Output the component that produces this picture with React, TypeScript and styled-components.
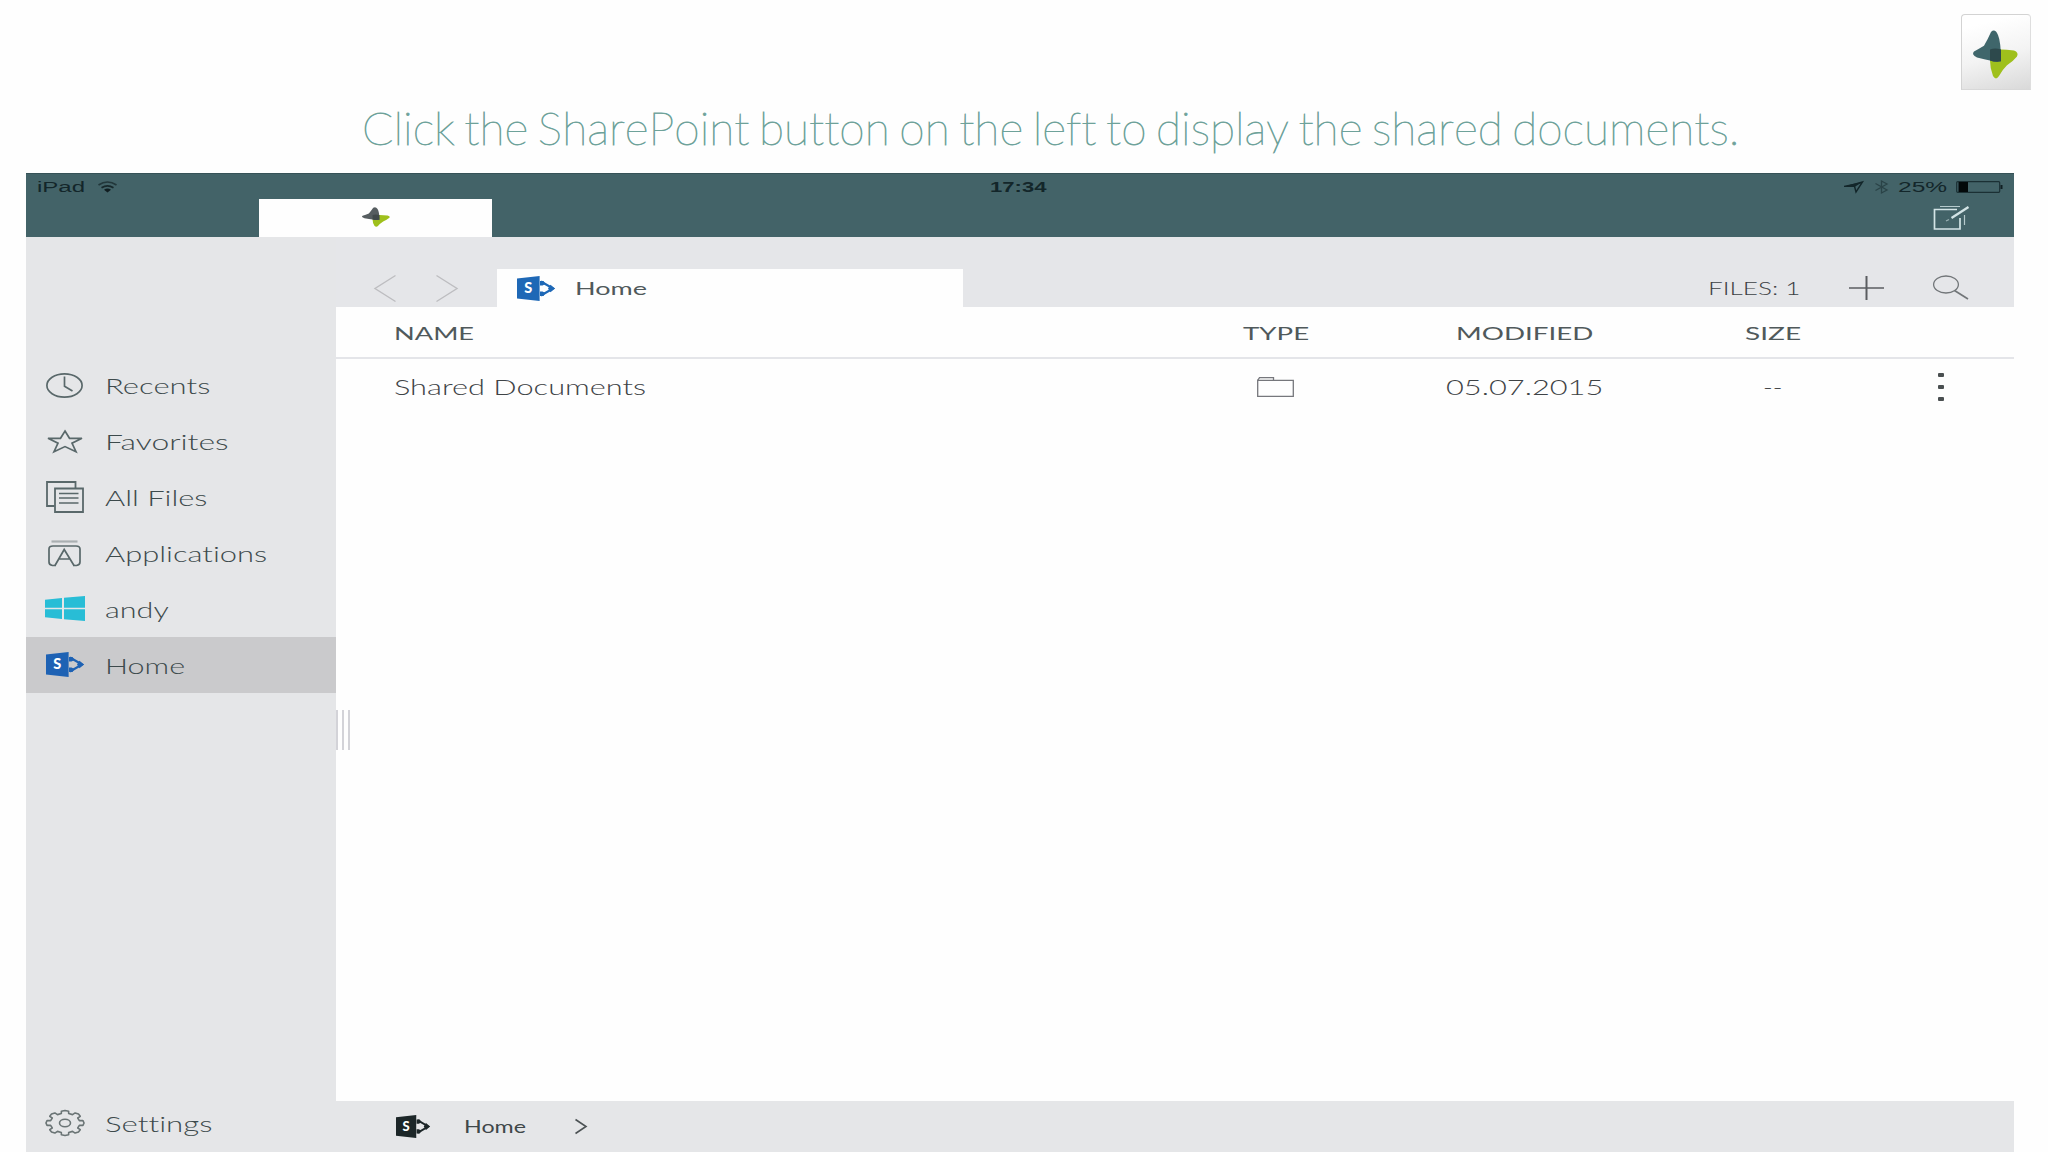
import React, { useLayoutEffect, useRef, useState } from "react";
import styled, { createGlobalStyle } from "styled-components";

const GlobalStyle = createGlobalStyle`
  *, *::before, *::after { box-sizing: border-box; }
  body { margin: 0; background: #fefefe; overflow: hidden; }
`;

const Page = styled.div`
  width: 2048px;
  height: 1152px;
  display: flex;
  flex-direction: column;
  font-family: Lato, "Liberation Sans", sans-serif;
  font-variant-ligatures: none;
  color: #50595b;
`;

/* Wide lettering: each label is stretched horizontally to the width it is given. */
const LabelBox = styled.div<{ $width: number; $drop: number }>`
  flex: none;
  width: ${(p) => p.$width}px;
  padding-top: ${(p) => p.$drop}px;
  white-space: nowrap;
`;

const LabelText = styled.span<{ $size: number; $weight: number; $color?: string; $sans?: boolean }>`
  display: inline-block;
  vertical-align: top;
  transform-origin: left center;
  font-size: ${(p) => p.$size}px;
  line-height: 1.2;
  font-weight: ${(p) => p.$weight};
  ${(p) => p.$color && `color: ${p.$color};`}
  ${(p) => p.$sans && `font-family: "Liberation Sans", Arial, sans-serif;`}
`;

type LabelProps = {
  children: string;
  width: number;
  size?: number;
  weight?: number;
  color?: string;
  drop?: number;
  sans?: boolean;
};

function Label({ children, width, size = 21, weight = 300, color, drop = 0, sans }: LabelProps) {
  const ref = useRef<HTMLSpanElement>(null);
  const [scale, setScale] = useState(1);
  useLayoutEffect(() => {
    if (ref.current) setScale((width + 2) / ref.current.offsetWidth);
  }, [width, children]);
  return (
    <LabelBox $width={width} $drop={drop}>
      <LabelText
        ref={ref}
        $size={size}
        $weight={weight}
        $color={color}
        $sans={sans}
        style={{ transform: `translateX(-1px) scaleX(${scale})` }}
      >
        {children}
      </LabelText>
    </LabelBox>
  );
}

const Svg = styled.svg`
  display: block;
  flex: none;
  overflow: visible;
  fill: none;
`;

const Caption = styled.header`
  height: 173px;
  flex: none;
  display: flex;
  align-items: flex-start;
  justify-content: space-between;
  padding: 14px 17px 0 363px;
`;

const Title = styled.div`
  padding-top: 87px;
  word-spacing: -3.5px;
  font-kerning: none;
  -webkit-text-stroke: 0.8px #6ea29a;
`;

const AppBadge = styled.div`
  width: 70px;
  height: 76px;
  padding: 15px 0 0 11px;
  border: 1px solid #dcdcdc;
  border-color: #d3d3d3 #dedede #d8d8d8 #d3d3d3;
  border-radius: 4px 4px 0 0;
  background: linear-gradient(165deg, #ffffff 15%, #f3f3f3 55%, #d9d9d9 100%);
`;

const Device = styled.main`
  width: 1988px;
  height: 979px;
  margin-left: 26px;
  display: flex;
  flex-direction: column;
`;

const TopBar = styled.div`
  height: 64px;
  flex: none;
  background: #436368;
  border-top: 1px solid #365257;
`;

const StatusRow = styled.div`
  height: 25px;
  display: grid;
  grid-template-columns: 1fr auto 1fr;
  align-items: center;
  padding: 1px 11px 0 8px;
`;

const StatusGroup = styled.div<{ $end?: boolean; $gap: number }>`
  display: flex;
  align-items: center;
  justify-content: ${(p) => (p.$end ? "flex-end" : "flex-start")};
  gap: ${(p) => p.$gap}px;
  padding-left: 4px;
`;

const TabRow = styled.div`
  height: 38px;
  display: flex;
  justify-content: space-between;
  padding: 0 45px 0 233px;
`;

const AppTab = styled.div`
  width: 233px;
  display: flex;
  justify-content: center;
  padding-top: 8px;
  background: #fefefe;
`;

const EditButton = styled.div`
  padding-top: 6px;
`;

const Body = styled.div`
  flex: 1;
  display: flex;
  min-height: 0;
`;

const Sidebar = styled.nav`
  width: 310px;
  flex: none;
  display: flex;
  flex-direction: column;
  padding-top: 120px;
  background: #e5e6e8;
`;

const NavRow = styled.div<{ $active?: boolean; $last?: boolean }>`
  height: 56px;
  display: flex;
  align-items: center;
  padding-left: 18px;
  gap: 21px;
  background: ${(p) => (p.$active ? "#cacacc" : "transparent")};
  ${(p) => p.$last && "margin-top: auto; height: 58px;"}
`;

const IconSlot = styled.div<{ $lift: number }>`
  width: 41px;
  display: flex;
  justify-content: center;
  padding-bottom: ${(p) => p.$lift}px;
`;

const Content = styled.section`
  position: relative;
  flex: 1;
  display: flex;
  flex-direction: column;
  background: #fefefe;
`;

const Toolbar = styled.div`
  height: 70px;
  flex: none;
  display: flex;
  align-items: flex-end;
  justify-content: space-between;
  padding: 0 45px 0 38px;
  background: #e5e6e9;
`;

const ToolGroup = styled.div`
  display: flex;
  align-items: flex-end;
`;

const Arrows = styled.div`
  display: flex;
  gap: 40px;
  padding-bottom: 5px;
  margin-right: 39px;
`;

const FileTab = styled.div`
  width: 466px;
  height: 38px;
  display: flex;
  align-items: center;
  gap: 21px;
  padding-left: 20px;
  background: #fefefe;
`;

const Tools = styled.div`
  height: 38px;
  display: flex;
  align-items: center;
  gap: 49px;
`;

const Row = styled.div<{ $head?: boolean }>`
  height: ${(p) => (p.$head ? 52 : 56)}px;
  display: grid;
  grid-template-columns: 815px 249px 249px 248px 88px;
  align-items: center;
  border-bottom: ${(p) => (p.$head ? "2px solid #e4e5e9" : "none")};
`;

const Cell = styled.div<{ $name?: boolean }>`
  display: flex;
  justify-content: ${(p) => (p.$name ? "flex-start" : "center")};
  padding-left: ${(p) => (p.$name ? 59 : 0)}px;
`;

const RowText = styled.div`
  padding-bottom: 1px;
`;

const Dots = styled.div`
  display: flex;
  flex-direction: column;
  gap: 8px;
  padding-bottom: 1px;
`;

const Dot = styled.i`
  width: 6px;
  height: 4px;
  border-radius: 1px;
  background: #4a4f51;
`;

const Handle = styled.div`
  position: absolute;
  left: 0;
  top: 473px;
  height: 40px;
  display: flex;
  gap: 4px;
`;

const Grip = styled.i`
  width: 2px;
  background: #d3d3d8;
`;

const Breadcrumb = styled.footer`
  height: 51px;
  margin-top: auto;
  display: flex;
  align-items: center;
  padding: 0 0 0 60px;
  background: #e5e6e8;
`;

const Spacer = styled.div<{ $w: number }>`
  width: ${(p) => p.$w}px;
`;

const INK = "#59686a";

function StarLogo({ width, height, dark = "#3f666b", cross = "#2d494c" }: { width: number; height: number; dark?: string; cross?: string }) {
  return (
    <Svg width={width} height={height} viewBox="0 0 45 50" preserveAspectRatio="none">
      <path d="M17 31V20Q18 19 28 20Q33 20 41 21Q46 23 44 27Q40 32 34 36Q29 41 26 47Q23 52 20 47Q17 39 17 31Z" fill="#9fc01c" />
      <path d="M18 2Q22-2 25 5Q28 12 28 32Q22 33 17 31Q12 30 4 28Q-2 25 1 22Q6 19 11 16Q15 9 18 2Z" fill={dark} />
      <path d="M17 20Q22 18 28 20V32Q22 33 17 31Z" fill={cross} />
    </Svg>
  );
}

function SharePointIcon({ width, height, color, paper }: { width: number; height: number; color: string; paper: string }) {
  return (
    <Svg width={width} height={height} viewBox="0 0 38 25" preserveAspectRatio="none">
      <path d="M24 5.500 36 12.500 24 19.500" stroke={color} strokeWidth="2.200" />
      <path d="M23 5H26.500L28.500 8 25.500 9.500H23ZM23 20H26.500L28.500 17 25.500 15.500H23Z" fill={color} />
      <path d="M31 12.500 33.500 8.800 38 12.500 33.500 16.200Z" fill={color} />
      <path d="M22.600 12.500 24.500 11.500V13.500Z" fill={paper} />
      <path d="M0 2.400 22.600 0V25L0 22.600Z" fill={color} />
      <text x="11.3" y="17.400" textAnchor="middle" fontFamily="Lato, sans-serif" fontWeight="900" fontSize="14.500" fill="#fff">
        S
      </text>
    </Svg>
  );
}

const ClockIcon = () => (
  <Svg width="37" height="25" viewBox="0 0 37 25" stroke={INK} strokeWidth="1.7">
    <ellipse cx="18.5" cy="12.5" rx="17.6" ry="11.6" />
    <path d="M18.5 3.5V13.2L26.5 18" />
  </Svg>
);

const FavoriteIcon = () => (
  <Svg width="38" height="24" viewBox="0 0 38 24" stroke={INK} strokeWidth="1.7">
    <path d="M19 2 23.500 9.300H36L26 14.200 30 22.700 19 17.600 8 22.700 12 14.200 2 9.300H14.500Z" />
  </Svg>
);

const FilesIcon = () => (
  <Svg width="38" height="32" viewBox="0 0 38 32" stroke={INK} strokeWidth="1.8">
    <path d="M8.5 25H1V1H29.5V7" />
    <path d="M9 7.5H37V31H9Z" />
    <path d="M13 12.5H32.500M13 17H32.500M13 22H32.500" strokeWidth="1.5" />
  </Svg>
);

const AppsIcon = () => (
  <Svg width="33" height="27" viewBox="0 0 33 27" stroke={INK} strokeWidth="1.7">
    <path d="M3.500 1.500H29.500" stroke="#a9afb1" strokeWidth="2.2" />
    <path d="M8 25.500H4.500Q1 25 1 22V9Q1 6 5 6H28Q32 6 32 9V22Q32 25 28.500 25.500H25" />
    <path d="M7 25.500 16.200 9.500 26 25.500M11.500 19H21.500" />
  </Svg>
);

const WindowsIcon = () => (
  <Svg width="40" height="25" viewBox="0 0 40 25">
    <path fill="#28bdd6" d="M0 3.800 17 2V11.800H0ZM19 1.800 40 0V11.800H19ZM0 13.200H17V23L0 21.200ZM19 13.200H40V25L19 23.200Z" />
  </Svg>
);

function gearPath() {
  const points: string[] = [];
  const teeth = 8;
  for (let i = 0; i < teeth; i++) {
    [[-0.25, 0.8], [-0.2, 0.99], [0, 1.03], [0.2, 0.99], [0.25, 0.8]].forEach(([offset, radius]) => {
      const angle = (i / teeth) * Math.PI * 2 + offset;
      points.push(`${(20 + Math.cos(angle) * radius * 18.5).toFixed(2)} ${(13 + Math.sin(angle) * radius * 12.2).toFixed(2)}`);
    });
  }
  return `M${points.join("L")}Z`;
}

const GearIcon = () => (
  <Svg width="40" height="26" viewBox="0 0 40 26" stroke="#6a7475" strokeWidth="1.6" strokeLinejoin="round">
    <path d={gearPath()} />
    <ellipse cx="20" cy="13" rx="5.500" ry="3.800" />
  </Svg>
);

const Chevron = ({ flip }: { flip?: boolean }) => (
  <Svg width="22" height="27" viewBox="0 0 22 27" stroke="#bdbdc0" strokeWidth="1.4">
    <path d={flip ? "M0.500 0.500 21 13.500 0.500 26.500" : "M21.500 0.500 1 13.500 21.500 26.500"} />
  </Svg>
);

const WifiIcon = () => (
  <Svg width="19" height="12" viewBox="0 0 19 12" stroke="#17282b" strokeWidth="1.700">
    <path d="M0.500 4Q9.500-2 18.500 4" opacity=".75" />
    <path d="M3.500 6.800Q9.500 2.800 15.500 6.800" />
    <path d="M6 8.700Q9.500 6.200 13 8.700L9.500 11.500Z" fill="#101d20" stroke="none" />
  </Svg>
);

const LocationIcon = () => (
  <Svg width="20" height="13" viewBox="0 0 20 13" stroke="#13262a" strokeWidth="1.400">
    <path d="M18.500 1 3 5.300H10.500L12 11Z" />
    <path d="M18.500 1 0 4.700V6H10.500Z" fill="#13262a" stroke="none" />
  </Svg>
);

const BluetoothIcon = () => (
  <Svg width="15" height="14" viewBox="0 0 15 14" stroke="#2a4347" strokeWidth="1.300">
    <path d="M1.500 3.500 13 10 7.500 13V1L13 4 1.500 10.500" />
  </Svg>
);

const BatteryIcon = () => (
  <Svg width="47" height="12" viewBox="0 0 47 12">
    <rect x=".7" y=".7" width="43" height="10.600" rx="1" stroke="#1b3034" strokeWidth="1.200" />
    <rect x="2.500" y="1" width="9.500" height="10" fill="#03090a" />
    <path d="M44.500 4H46.500V8H44.500Z" fill="#101f22" />
  </Svg>
);

const EditIcon = () => (
  <Svg width="36" height="25" viewBox="0 0 36 25" stroke="#d3e4e6" strokeWidth="1.700">
    <path d="M24 4.500H1.500V24H27V13" />
    <path d="M7 1.500H27M31.500 10V20" strokeWidth="1.200" opacity=".8" />
    <path d="M35.500 2 18.500 13" strokeWidth="2.300" />
    <path d="M13 16 16 14.500" strokeWidth="1.300" opacity=".6" />
  </Svg>
);

const PlusIcon = () => (
  <Svg width="35" height="24" viewBox="0 0 35 24" stroke="#5a5d60">
    <path d="M0 12H35" strokeWidth="1.500" />
    <path d="M17.500 0V24" strokeWidth="2" />
  </Svg>
);

const SearchIcon = () => (
  <Svg width="36" height="25" viewBox="0 0 36 25" stroke="#727679" strokeWidth="1.300">
    <ellipse cx="13" cy="8.500" rx="12.400" ry="8.500" />
    <path d="M21.500 14.500 35 23" strokeWidth="1.700" />
  </Svg>
);

const FolderIcon = () => (
  <Svg width="37" height="20" viewBox="0 0 37 20" stroke="#76777c" strokeWidth="1.300">
    <path d="M.7 19.300V3.300H36.300V19.300Z" />
    <path d="M.7 3.300 2.500.7H16.500V3.300" />
  </Svg>
);

const navItems = [
  { label: "Recents", width: 103, icon: <ClockIcon />, lift: 0 },
  { label: "Favorites", width: 121, icon: <FavoriteIcon />, lift: 0 },
  { label: "All Files", width: 101, icon: <FilesIcon />, lift: 0 },
  { label: "Applications", width: 160, icon: <AppsIcon />, lift: 0 },
  { label: "andy", width: 62, icon: <WindowsIcon />, lift: 2 },
  { label: "Home", width: 78, icon: <SharePointIcon width={38} height={25} color="#1e62b4" paper="#cacacc" />, lift: 2, active: true },
];

export default function App() {
  return (
    <Page>
      <GlobalStyle />
      <Caption>
        <Title>
          <Label width={1375} size={45} weight={200} color="#6ea29a">
            Click the SharePoint button on the left to display the shared documents.
          </Label>
        </Title>
        <AppBadge>
          <StarLogo width={45} height={49} />
        </AppBadge>
      </Caption>
      <Device>
        <TopBar>
          <StatusRow>
            <StatusGroup $gap={14}>
              <Label width={46} size={15.5} weight={400} color="#13262a" sans>iPad</Label>
              <WifiIcon />
            </StatusGroup>
            <Label width={55} size={15.5} weight={700} color="#13262a" sans>17:34</Label>
            <StatusGroup $end $gap={10}>
              <LocationIcon />
              <BluetoothIcon />
              <Label width={47} size={15.5} weight={400} color="#13262a" sans>25%</Label>
              <BatteryIcon />
            </StatusGroup>
          </StatusRow>
          <TabRow>
            <AppTab>
              <StarLogo width={28} height={20} dark="#565d60" cross="#41494a" />
            </AppTab>
            <EditButton>
              <EditIcon />
            </EditButton>
          </TabRow>
        </TopBar>
        <Body>
          <Sidebar>
            {navItems.map((item) => (
              <NavRow key={item.label} $active={item.active}>
                <IconSlot $lift={item.lift}>{item.icon}</IconSlot>
                <Label width={item.width} drop={2} color="#3d4a4c">{item.label}</Label>
              </NavRow>
            ))}
            <NavRow $last>
              <IconSlot $lift={0}><GearIcon /></IconSlot>
              <Label width={105} drop={1} color="#3d4a4c">Settings</Label>
            </NavRow>
          </Sidebar>
          <Content>
            <Toolbar>
              <ToolGroup>
                <Arrows>
                  <Chevron />
                  <Chevron flip />
                </Arrows>
                <FileTab>
                  <SharePointIcon width={38} height={25} color="#1e68b6" paper="#fefefe" />
                  <Label width={70} size={18} weight={400} drop={1}>Home</Label>
                </FileTab>
              </ToolGroup>
              <Tools>
                <Label width={91} size={18} weight={300} color="#3c4044" drop={1}>FILES: 1</Label>
                <PlusIcon />
                <SearchIcon />
              </Tools>
            </Toolbar>
            <Row $head>
              <Cell $name><Label width={78} size={18} weight={400} drop={4}>NAME</Label></Cell>
              <Cell><Label width={64} size={18} weight={400} drop={4}>TYPE</Label></Cell>
              <Cell><Label width={135} size={18} weight={400} drop={4}>MODIFIED</Label></Cell>
              <Cell><Label width={54} size={18} weight={400} drop={4}>SIZE</Label></Cell>
            </Row>
            <Row>
              <Cell $name><RowText><Label width={250} color="#3f4346">Shared Documents</Label></RowText></Cell>
              <Cell><FolderIcon /></Cell>
              <Cell><RowText><Label width={155} color="#3f4346">05.07.2015</Label></RowText></Cell>
              <Cell><RowText><Label width={18} color="#3f4346">--</Label></RowText></Cell>
              <Cell>
                <Dots>
                  <Dot />
                  <Dot />
                  <Dot />
                </Dots>
              </Cell>
            </Row>
            <Handle>
              <Grip />
              <Grip />
              <Grip />
            </Handle>
            <Breadcrumb>
              <SharePointIcon width={34} height={23} color="#1c2628" paper="#e5e6e8" />
              <Spacer $w={35} />
              <Label width={60} size={16.5} weight={400} color="#3f484a" drop={2}>Home</Label>
              <Spacer $w={50} />
              <Svg width="12" height="15" viewBox="0 0 12 15" stroke="#4c5254" strokeWidth="1.600">
                <path d="M.5.5 11 7.500.5 14.500" />
              </Svg>
            </Breadcrumb>
          </Content>
        </Body>
      </Device>
    </Page>
  );
}
